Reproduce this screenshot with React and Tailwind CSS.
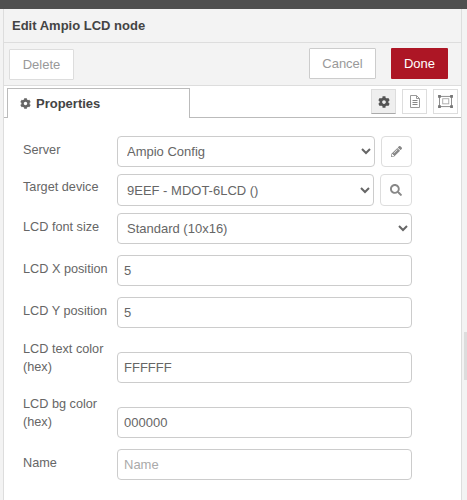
import React from 'react';
import { FaCog, FaPencilAlt, FaSearch } from 'react-icons/fa';

const labelClass = 'w-[94px] shrink-0 text-[12.7px] leading-[18px] text-[#666]';
const fieldClass =
    'h-[31px] w-full min-w-0 rounded border border-[#ccc] bg-white px-[6px] text-[13px] text-[#666] outline-none';

const FormRow = ({ label, pad = 'pb-2', top, children }) => (
    <div className={`flex items-end ${top}`}>
        <label className={`${labelClass} ${pad}`}>{label}</label>
        <div className="flex flex-1 min-w-0 gap-[6px]">{children}</div>
    </div>
);

const Select = ({ children, className = '' }) => (
    <select className={`${fieldClass} pl-[5px] ${className}`}>{children}</select>
);

const SideButton = ({ width, height, children }) => (
    <button className={`${width} ${height} shrink-0 flex items-center justify-center rounded border border-[#ddd] bg-white text-[#888]`}>
        {children}
    </button>
);

const TabButton = ({ active, children }) => (
    <button
        className={`w-[25px] h-[25px] flex items-center justify-center border border-[#ddd] ${
            active ? 'bg-[#efefef] border-b-[#aaa] text-[#555]' : 'bg-white text-[#888]'
        }`}
    >
        {children}
    </button>
);

const FileIcon = () => (
    <svg width="12" height="15" viewBox="0 0 12 15" fill="none" stroke="#999" strokeWidth="1">
        <path d="M1.5 1.5H7.5L10.5 4.5V13.5H1.5Z" />
        <path d="M7.5 1.5V4.5H10.5" />
        <path d="M3.5 6.5H8.5M3.5 8.5H8.5M3.5 10.5H8.5" stroke="#888" />
    </svg>
);

const FrameIcon = () => (
    <svg width="15" height="13" viewBox="0 0 16 14" fill="none" stroke="#888" strokeWidth="1">
        <rect x="1.5" y="1.5" width="13" height="11" />
        <rect x="5" y="4" width="6.5" height="5.5" stroke="#aaa" />
        <rect x="0" y="0" width="3" height="3" fill="#777" stroke="none" />
        <rect x="13" y="0" width="3" height="3" fill="#777" stroke="none" />
        <rect x="0" y="11" width="3" height="3" fill="#777" stroke="none" />
        <rect x="13" y="11" width="3" height="3" fill="#777" stroke="none" />
    </svg>
);

const App = () => {
    return (
        <div className="flex flex-col h-[500px] w-[467px] overflow-hidden bg-[#f3f3f3] font-['Liberation_Sans',Arial,sans-serif]">
            <div className="h-[9px] shrink-0 bg-[#4f4f4f]" />

            <div className="flex flex-1 min-h-0">
                <div className="w-[3px] shrink-0 bg-[#f3f3f3]" />

                <div className="flex flex-col flex-1 min-w-0 border-x border-[#ddd] bg-white">
                    {/* Title */}
                    <div className="h-[34px] shrink-0 flex items-center pl-2 border-b border-[#ddd] bg-[#f3f3f3] text-[13px] font-bold text-[#444]">
                        Edit Ampio LCD node
                    </div>

                    {/* Toolbar */}
                    <div className="h-[43px] shrink-0 flex items-start justify-between pl-[5px] pr-[13px] pt-[5px] border-b border-[#ddd] bg-[#f3f3f3] text-[13px]">
                        <button className="w-[65px] h-[31px] mt-[1px] rounded-[1px] border border-[#ddd] bg-white text-[#999]">
                            Delete
                        </button>
                        <div className="flex gap-[15px]">
                            <button className="w-[67px] h-[31px] rounded-[1px] border border-[#ccc] bg-white text-[#999]">
                                Cancel
                            </button>
                            <button className="w-[57px] h-[31px] rounded-[1px] bg-[#ad1625] text-white">
                                Done
                            </button>
                        </div>
                    </div>

                    {/* Tabs */}
                    <div className="h-[32px] shrink-0 flex items-end justify-between pl-[3px] pr-[3px] border-b border-[#bbb]">
                        <div className="w-[183px] h-[30px] -mb-px flex items-center gap-[5px] pl-[12px] border border-b-0 border-[#bbb] border-b-white bg-white text-[13px] font-bold text-[#444]">
                            <FaCog className="text-[#666] text-[11px]" />
                            Properties
                        </div>
                        <div className="flex gap-[6px] mb-[3px]">
                            <TabButton active>
                                <FaCog className="text-[12px]" />
                            </TabButton>
                            <TabButton>
                                <FileIcon />
                            </TabButton>
                            <TabButton>
                                <FrameIcon />
                            </TabButton>
                        </div>
                    </div>

                    {/* Form */}
                    <div className="flex-1 pl-[19px] pr-[49px]">
                        <FormRow label="Server" top="mt-[18px]">
                            <Select><option>Ampio Config</option></Select>
                            <SideButton width="w-[31px]" height="h-[31px]">
                                <FaPencilAlt className="text-[11px]" />
                            </SideButton>
                        </FormRow>
                        <FormRow label="Target device" pad="pb-2.5" top="mt-[7px]">
                            <Select className="h-[32px]"><option>9EEF - MDOT-6LCD ()</option></Select>
                            <SideButton width="w-[32px]" height="h-[32px]">
                                <FaSearch className="text-[12px]" />
                            </SideButton>
                        </FormRow>
                        <FormRow label="LCD font size" top="mt-[7px]">
                            <Select><option>Standard (10x16)</option></Select>
                        </FormRow>
                        <FormRow label="LCD X position" top="mt-[11px]">
                            <input className={fieldClass} defaultValue="5" />
                        </FormRow>
                        <FormRow label="LCD Y position" top="mt-[11px]">
                            <input className={fieldClass} defaultValue="5" />
                        </FormRow>
                        <FormRow label={<>LCD text color<br />(hex)</>} pad="pb-[7px]" top="mt-[12px]">
                            <input className={fieldClass} defaultValue="FFFFFF" />
                        </FormRow>
                        <FormRow label={<>LCD bg color<br />(hex)</>} pad="pb-[7px]" top="mt-[12px]">
                            <input className={fieldClass} defaultValue="000000" />
                        </FormRow>
                        <FormRow label="Name" top="mt-[11px]">
                            <input className={`${fieldClass} placeholder:text-[#aaa]`} placeholder="Name" />
                        </FormRow>
                    </div>
                </div>

                {/* Resize handle */}
                <div className="w-[5px] shrink-0 pl-[2px] pt-[323px]">
                    <div className="h-[48px] w-[3px] bg-[#ddd]" />
                </div>
            </div>
        </div>
    );
};

export default App;
